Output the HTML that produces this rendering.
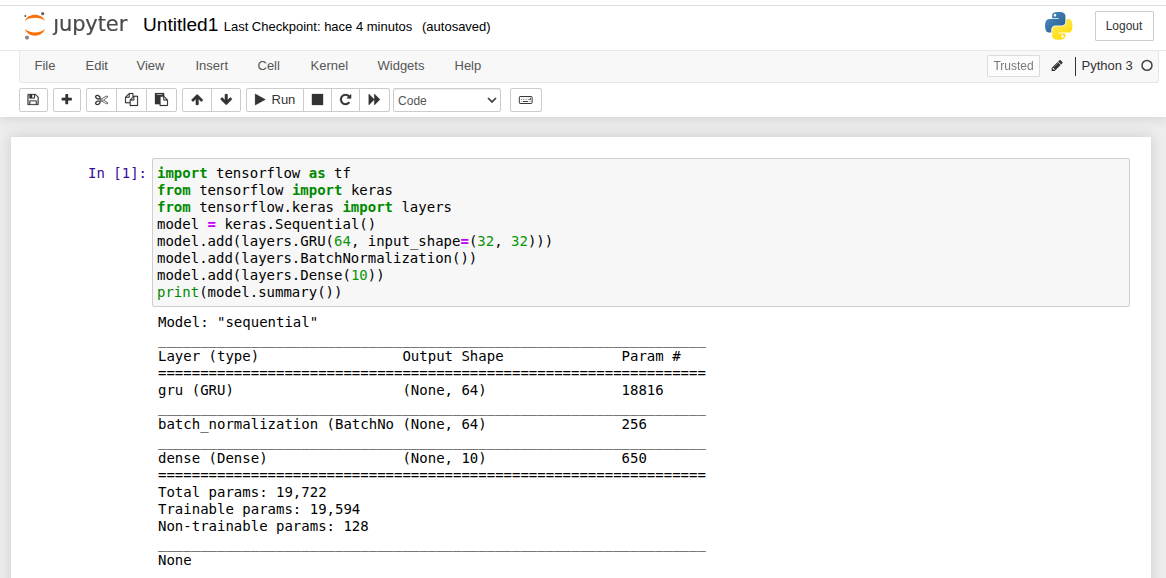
<!DOCTYPE html>
<html lang="en"><head><meta charset="utf-8"><title>Untitled1 - Jupyter Notebook</title>
<style>
*{box-sizing:border-box}
html,body{margin:0;padding:0}
body{width:1166px;height:578px;overflow:hidden;background:#eee;font-family:"Liberation Sans",Arial,sans-serif;font-size:13px;line-height:1.42857;color:#000;position:relative}
#topstrip{position:absolute;left:0;top:0;width:1166px;height:5px;background:#fff;z-index:3}
#topline{position:absolute;left:0;top:5px;width:1166px;height:1px;background:#dcdfe3;z-index:3}
#header{position:absolute;left:0;top:6px;width:1166px;height:111px;background:#fff;box-shadow:0 0 12px 1px rgba(87,87,87,.2);z-index:2}
#header>*{position:absolute}
#hline{left:0;top:44px;width:1166px;height:1px;background:#e7e7e7}
#logo{left:16px;top:0;will-change:transform}
#fname{left:143px;top:7px;font-size:19.1px;line-height:24px;color:#000;white-space:nowrap}
#ckpt{left:223.7px;top:12px;font-size:13px;line-height:18px;white-space:nowrap}
#auto{left:422px;top:12px;font-size:13px;line-height:18px;white-space:nowrap}
#logout{left:1095px;top:5px;width:59px;height:30px;border:1px solid #ccc;border-radius:1px;background:#fff;font-size:12px;line-height:28px;text-align:center;color:#333;text-indent:-1px}
#pylogo{left:1045px;top:6px}
#menubar{left:19px;top:44px;width:1140px;height:33px;background:#f8f8f8;border:1px solid #e7e7e7;border-radius:2px}
.mi{position:absolute;top:6px;font-size:13px;line-height:18px;color:#555;margin-left:-0.5px;white-space:nowrap}
#trusted{position:absolute;left:967px;top:4px;width:53px;height:22px;border:1px solid #ccc;border-radius:1px;background:#fff;color:#333;opacity:.65;will-change:transform;font-size:12px;line-height:20px;text-align:center}
#pencil{position:absolute;left:0;top:0}#pencil svg{position:absolute}
#kbar{position:absolute;left:1055px;top:6px;width:1px;height:19px;background:#333}
#kname{position:absolute;left:1061.5px;top:5px;font-size:13px;line-height:20px;color:#333;white-space:nowrap}
#kind{position:absolute;left:1120px;top:8px}
#toolbar{left:0;top:82px;width:1166px;height:24px}
.btn{position:absolute;top:0;height:24px;border:1px solid #ccc;background:#fff;border-radius:2px;color:#333}
#toolbar svg{position:absolute}
#run{position:absolute;left:271.5px;top:3px;font-size:13px;line-height:18px;color:#333}
#sel{box-shadow:inset 0 1px 1px rgba(0,0,0,.075)}
#sel span{position:absolute;left:4.1px;top:3px;font-size:12px;line-height:18px;color:#555}
#site{position:absolute;left:0;top:117px;width:1166px;height:461px;background:#eee}
#nbc{position:absolute;left:11px;top:20px;width:1140px;height:460px;background:#fff;box-shadow:0 0 12px 1px rgba(87,87,87,.2)}
.mono{font-family:"DejaVu Sans Mono","Liberation Mono",monospace;font-size:14px;line-height:17px;white-space:pre}
#prompt{position:absolute;left:77px;top:28px;color:#3c0c9c}
#inarea{position:absolute;left:141px;top:21px;width:978px;height:149px;border:1px solid #cfcfcf;border-radius:2px;background:#f7f7f7}
#code{position:absolute;left:4px;top:6px;margin:0;color:#000}
#out{position:absolute;left:147px;top:177px;margin:0;color:#000}
.k{color:#008a00;font-weight:bold}.n{color:#0a960a}.o{color:#c400f5;font-weight:bold}.b{color:#008a00}
</style></head><body>
<div id="topstrip"></div><div id="topline"></div>
<div id="header">
 <svg id="logo" width="120" height="40" viewBox="16 6 120 40">
  <path fill="#fb6f04" d="M24.9,21 C28,12.6 42,12.6 45,21 C40.5,16.6 29.5,16.6 24.9,21z"/>
  <path fill="#fb6f04" d="M24.9,29.1 C28,37.9 42,37.9 45,29.1 C40.5,33.6 29.5,33.6 24.9,29.1z"/>
  <circle cx="25.3" cy="15.9" r="1" fill="#555"/>
  <circle cx="42.7" cy="13.7" r="1.6" fill="#666"/>
  <circle cx="27" cy="37.6" r="2.1" fill="#8a8a8a"/>
  <text x="53.2" y="30.8" font-family="'DejaVu Sans','Liberation Sans',sans-serif" font-size="21" letter-spacing="-0.1" fill="#4a4a4a" stroke="#4a4a4a" stroke-width="0.22">jupyter</text>
  <rect x="53.6" y="12" width="5" height="6.3" fill="#fff"/>
 </svg>
 <span id="fname">Untitled1</span>
 <span id="ckpt">Last Checkpoint: hace 4 minutos</span>
 <span id="auto">(autosaved)</span>
 <svg id="pylogo" width="27.5" height="28" viewBox="0 0 111 113">
  <defs><linearGradient id="gb" x1="0" y1="0" x2="0.75" y2="0.8"><stop offset="0" stop-color="#4a8fc8"/><stop offset="1" stop-color="#2f6496"/></linearGradient>
  <linearGradient id="gy" x1="0.75" y1="0.9" x2="0.35" y2="0.2"><stop offset="0" stop-color="#ffdb00"/><stop offset="1" stop-color="#ffe850"/></linearGradient></defs>
  <path fill="url(#gb)" d="M54.918,0C50.335,0.021,45.958,0.412,42.106,1.094c-11.346,2.004-13.406,6.2-13.406,13.937v10.219h26.813v3.406H28.7 H18.638c-7.792,0-14.616,4.684-16.75,13.594c-2.462,10.213-2.571,16.586,0,27.25c1.906,7.938,6.458,13.594,14.25,13.594h9.219v-12.25 c0-8.85,7.657-16.656,16.75-16.656h26.781c7.455,0,13.406-6.138,13.406-13.625v-25.53c0-7.267-6.13-12.726-13.406-13.938 C64.282,0.328,59.502-0.02,54.918,0z M40.418,8.219c2.77,0,5.031,2.299,5.031,5.125c0,2.816-2.262,5.094-5.031,5.094 c-2.779,0-5.031-2.277-5.031-5.094C35.387,10.518,37.639,8.219,40.418,8.219z"/><path fill="url(#gy)" d="M85.638,28.657v11.906c0,9.231-7.826,17-16.75,17H42.106c-7.336,0-13.406,6.279-13.406,13.625v25.531 c0,7.267,6.319,11.541,13.406,13.625c8.487,2.496,16.626,2.947,26.781,0c6.75-1.954,13.406-5.888,13.406-13.625V86.5H55.513v-3.406 h26.781h13.406c7.792,0,10.696-5.435,13.406-13.594c2.799-8.399,2.68-16.476,0-27.25c-1.926-7.757-5.604-13.594-13.406-13.594H85.638z M70.575,93.313c2.779,0,5.031,2.277,5.031,5.094c0,2.826-2.252,5.125-5.031,5.125c-2.770,0-5.031-2.299-5.031-5.125 C65.544,95.590,67.806,93.313,70.575,93.313z"/>
 </svg>
 <div id="logout">Logout</div>
 <div id="hline"></div>
 <div id="menubar">
  <span class="mi" style="left:15px">File</span>
  <span class="mi" style="left:66px">Edit</span>
  <span class="mi" style="left:117px">View</span>
  <span class="mi" style="left:176px">Insert</span>
  <span class="mi" style="left:238px">Cell</span>
  <span class="mi" style="left:291px">Kernel</span>
  <span class="mi" style="left:358px">Widgets</span>
  <span class="mi" style="left:435px">Help</span>
  <div id="trusted">Trusted</div>
  <span id="pencil"><svg style="left:1029px;top:6px" width="16" height="16" viewBox="0 0 16 16"><path transform="translate(1.70,1.90) scale(0.007254)" fill="#333" d="M491 1536l91-91-235-235-91 91v107h128v128h107zm523-928q0-22-22-22-10 0-17 7l-542 542q-7 7-7 17 0 22 22 22 10 0 17-7l542-542q7-7 7-17zm-54-192l416 416-832 832h-416v-416zm683 96q0 53-37 90l-166 166-416-416 166-165q36-38 90-38 53 0 91 38l235 234q37 39 37 91z"/></svg></span>
  <div id="kbar"></div>
  <div id="kname">Python 3</div>
  <svg id="kind" width="13" height="13" viewBox="0 0 13 13"><circle cx="7.0" cy="6.4" r="4.95" fill="none" stroke="#444" stroke-width="1.5"/></svg>
 </div>
 <div id="toolbar">
  <div class="btn" style="left:19px;width:29px"></div>
  <div class="btn" style="left:53px;width:28px"></div>
  <div class="btn" style="left:86px;width:31px;border-radius:2px 0 0 2px"></div>
  <div class="btn" style="left:116px;width:31px;border-radius:0"></div>
  <div class="btn" style="left:146px;width:31px;border-radius:0 2px 2px 0"></div>
  <div class="btn" style="left:182px;width:30px;border-radius:2px 0 0 2px"></div>
  <div class="btn" style="left:211px;width:30px;border-radius:0 2px 2px 0"></div>
  <div class="btn" style="left:246px;width:58px;border-radius:2px 0 0 2px"></div>
  <div class="btn" style="left:303px;width:29px;border-radius:0"></div>
  <div class="btn" style="left:331px;width:29px;border-radius:0"></div>
  <div class="btn" style="left:359px;width:31px;border-radius:0 2px 2px 0"></div>
  <div class="btn" id="sel" style="left:393px;width:108px"><span>Code</span></div>
  <div class="btn" style="left:510px;width:32px"></div>
  <svg style="left:25px;top:4px" width="16" height="16" viewBox="0 0 16 16"><path transform="translate(1.55,1.00) scale(0.007254)" fill="#333" stroke="#333" stroke-width="32" d="M512 1536h768v-384h-768v384zm896 0h128v-896q0-14-10-38.500t-20-34.500l-281-281q-10-10-34-20t-39-10v416q0 40-28 68t-68 28h-576q-40 0-68-28t-28-68v-416h-128v1280h128v-416q0-40 28-68t68-28h832q40 0 68 28t28 68v416zm-384-928v-320q0-13-9.500-22.500t-22.500-9.500h-192q-13 0-22.500 9.500t-9.500 22.500v320q0 13 9.500 22.500t22.500 9.500h192q13 0 22.500-9.500t9.500-22.500zm640 32v928q0 40-28 68t-68 28h-1344q-40 0-68-28t-28-68v-1344q0-40 28-68t68-28h928q40 0 88 20t76 48l280 280q28 28 48 76t20 88z"/></svg><svg style="left:59px;top:4px" width="16" height="16" viewBox="0 0 16 16"><path transform="translate(1.25,1.00) scale(0.007254)" fill="#333" stroke="#333" stroke-width="10" d="M1600 736v192q0 40-28 68t-68 28h-416v416q0 40-28 68t-68 28h-192q-40 0-68-28t-28-68v-416h-416q-40 0-68-28t-28-68v-192q0-40 28-68t68-28h416v-416q0-40 28-68t68-28h192q40 0 68 28t28 68v416h416q40 0 68 28t28 68z"/></svg><svg style="left:94px;top:4px" width="16" height="16" viewBox="0 0 16 16"><path transform="translate(1.05,1.00) scale(0.007254)" fill="#333" stroke="#333" stroke-width="20" d="M960 896q26 0 45 19t19 45-19 45-45 19-45-19-19-45 19-45 45-19zm300 64l507 398q28 20 25 56-5 35-35 51l-128 64q-13 7-29 7-17 0-31-8l-690-387-110 66q-8 4-12 5 14 49 10 97-7 77-56 147.500t-132 123.500q-132 84-277 84-136 0-222-78-90-84-79-207 7-76 56-147t131-124q132-84 278-84 83 0 151 31 9-13 22-22l122-73-122-73q-13-9-22-22-68 31-151 31-146 0-278-84-82-53-131-124t-56-147q-5-59 15.500-113t63.500-93q85-79 222-79 145 0 277 84 83 52 132 123t56 148q4 48-10 97 4 1 12 5l110 66 690-387q14-8 31-8 16 0 29 7l128 64q30 16 35 51 3 36-25 56zm-681-260q46-42 21-108t-106-117q-92-59-192-59-74 0-109 33-46 42-21 108t106 117q92 59 192 59 74 0 109-33zm-85 745q81-51 106-117t-21-108q-35-33-109-33-100 0-192 59-81 51-106 117t21 108q35 33 109 33 100 0 192-59zm178-613l96 58v-11q0-36 33-56l14-8-79-47-26 26q-3 3-10 11t-12 12q-2 2-4 3.500t-3 2.500zm224 224l96 32 736-576-128-64-768 431v113l-160 96 9 8q2 2 7 6 4 4 11 12t11 12l26 26zm704 416l128-64-520-408-177 138q-2 3-13 7z"/></svg><svg style="left:124px;top:4px" width="16" height="16" viewBox="0 0 16 16"><path transform="translate(1.05,1.00) scale(0.007254)" fill="#333" stroke="#333" stroke-width="25" d="M1696 384q40 0 68 28t28 68v1216q0 40-28 68t-68 28h-960q-40 0-68-28t-28-68v-288h-544q-40 0-68-28t-28-68v-672q0-40 20-88t48-76l408-408q28-28 76-48t88-20h416q40 0 68 28t28 68v328q68-40 128-40h416zm-544 213l-299 299h299v-299zm-640-384l-299 299h299v-299zm196 647l316-316v-416h-384v416q0 40-28 68t-68 28h-416v640h512v-256q0-40 20-88t48-76zm956 804v-1152h-384v416q0 40-28 68t-68 28h-416v640h896z"/></svg><svg style="left:153px;top:4px" width="16" height="16" viewBox="0 0 16 16"><path transform="translate(1.95,1.00) scale(0.007254)" fill="#333" stroke="#333" stroke-width="25" d="M768 1664h896v-640h-416q-40 0-68-28t-28-68v-416h-384v1152zm256-1440v-64q0-13-9.500-22.500t-22.500-9.500h-704q-13 0-22.500 9.500t-9.500 22.500v64q0 13 9.500 22.500t22.500 9.500h704q13 0 22.500-9.500t9.500-22.500zm256 672h299l-299-299v299zm512 128v672q0 40-28 68t-68 28h-960q-40 0-68-28t-28-68v-160h-544q-40 0-68-28t-28-68v-1344q0-40 28-68t68-28h1088q40 0 68 28t28 68v328q21 13 36 28l408 408q28 28 48 76t20 88z"/></svg>
  <svg style="left:189px;top:4px" width="16" height="16" viewBox="0 0 16 16"><path transform="translate(1.70,1.00) scale(0.007254)" fill="#333" stroke="#333" stroke-width="32" d="M1675 971q0 51-37 90l-75 75q-38 38-91 38-54 0-90-38l-294-293v704q0 52-37.500 84.500t-90.500 32.500h-128q-53 0-90.500-32.500t-37.500-84.500v-704l-294 293q-36 38-90 38t-90-38l-75-75q-38-38-38-90 0-53 38-91l651-651q35-37 90-37 54 0 91 37l651 651q37 39 37 91z"/></svg><svg style="left:218px;top:4px" width="16" height="16" viewBox="0 0 16 16"><path transform="translate(1.75,1.00) scale(0.007254)" fill="#333" stroke="#333" stroke-width="32" d="M1675 832q0 53-37 90l-651 652q-39 37-91 37-53 0-90-37l-651-652q-38-36-38-90 0-53 38-91l74-75q39-37 91-37 53 0 90 37l294 294v-704q0-52 38-90t90-38h128q52 0 90 38t38 90v704l294-294q37-37 90-37 52 0 91 37l75 75q37 39 37 91z"/></svg><svg style="left:252px;top:4px" width="16" height="16" viewBox="0 0 16 16"><path transform="translate(1.70,1.00) scale(0.007254)" fill="#333" stroke="#333" stroke-width="32" d="M1576 927l-1328 738q-23 13-39.500 3t-16.500-36v-1472q0-26 16.500-36t39.500 3l1328 738q23 13 23 31t-23 31z"/></svg><svg style="left:310px;top:4px" width="16" height="16" viewBox="0 0 16 16"><path transform="translate(1.00,1.00) scale(0.007254)" fill="#333" stroke="#333" stroke-width="32" d="M1664 192v1408q0 26-19 45t-45 19h-1408q-26 0-45-19t-19-45v-1408q0-26 19-45t45-19h1408q26 0 45 19t19 45z"/></svg><svg style="left:338px;top:4px" width="16" height="16" viewBox="0 0 16 16"><path transform="translate(1.10,1.00) scale(0.007254)" fill="#333" stroke="#333" stroke-width="32" d="M1664 256v448q0 26-19 45t-45 19h-448q-42 0-59-40-17-39 14-69l138-138q-148-137-349-137-104 0-198.500 40.500t-163.500 109.500-109.500 163.500-40.500 198.500 40.500 198.500 109.500 163.500 163.500 109.500 198.500 40.500q119 0 225-52t179-147q7-10 23-12 15 0 25 9l137 138q9 8 9.500 20.500t-7.500 22.500q-109 132-264 204.500t-327 72.500q-156 0-298-61t-245-164-164-245-61-298 61-298 164-245 245-164 298-61q147 0 284.500 55.500t244.500 156.500l130-129q29-31 70-14 39 17 39 59z"/></svg><svg style="left:367px;top:4px" width="16" height="16" viewBox="0 0 16 16"><path transform="translate(1.70,1.00) scale(0.007254)" fill="#333" stroke="#333" stroke-width="32" d="M45 1651q-19 19-32 13t-13-32v-1472q0-26 13-32t32 13l710 710q9 9 13 19v-710q0-26 13-32t32 13l710 710q19 19 19 45t-19 45l-710 710q-19 19-32 13t-13-32v-710q-4 10-13 19z"/></svg><svg style="left:518px;top:7px" width="16" height="10" viewBox="518 95 16 10"><rect x="519.35" y="96.5" width="12.75" height="7" rx="0.7" fill="none" stroke="#383838" stroke-width="1"/><g fill="#333"><g opacity=".2"><rect x="520.9" y="97.6" width=".9" height=".9"/><rect x="522.6" y="97.6" width=".9" height=".9"/><rect x="524.3" y="97.6" width=".9" height=".9"/><rect x="526" y="97.6" width=".9" height=".9"/><rect x="527.7" y="97.6" width=".9" height=".9"/></g><g opacity=".55"><rect x="520.9" y="99.1" width="1.2" height=".9"/><rect x="523.1" y="99.1" width=".9" height=".9"/><rect x="524.8" y="99.1" width=".9" height=".9"/><rect x="526.5" y="99.1" width=".9" height=".9"/><rect x="528.1" y="99.1" width=".9" height=".9"/></g><path opacity=".75" d="M530,97.7h1v2.3h-1.9v-.9h.9z"/><rect x="523" y="101" width="5.2" height="1" opacity=".95"/><rect x="520.9" y="101" width=".9" height="1" opacity=".5"/><rect x="529.4" y="101" width=".7" height="1" opacity=".45"/><rect x="530.5" y="101" width=".7" height="1" opacity=".5"/></g></svg>
  <span id="run">Run</span>
  <svg style="left:487.2px;top:9.0px" width="10" height="6.4" viewBox="0 0 10 6.4"><path d="M1,1 L5,5 L9,1" fill="none" stroke="#444" stroke-width="1.75"/></svg>
 </div>
</div>
<div id="site">
 <div id="nbc">
  <div id="prompt" class="mono">In [1]:</div>
  <div id="inarea"><pre id="code" class="mono"><span class="k">import</span> tensorflow <span class="k">as</span> tf
<span class="k">from</span> tensorflow <span class="k">import</span> keras
<span class="k">from</span> tensorflow.keras <span class="k">import</span> layers
model <span class="o">=</span> keras.Sequential()
model.add(layers.GRU(<span class="n">64</span>, input_shape<span class="o">=</span>(<span class="n">32</span>, <span class="n">32</span>)))
model.add(layers.BatchNormalization())
model.add(layers.Dense(<span class="n">10</span>))
<span class="b">print</span>(model.summary())</pre></div>
  <pre id="out" class="mono">Model: "sequential"
_________________________________________________________________
Layer (type)                 Output Shape              Param #   
=================================================================
gru (GRU)                    (None, 64)                18816     
_________________________________________________________________
batch_normalization (BatchNo (None, 64)                256       
_________________________________________________________________
dense (Dense)                (None, 10)                650       
=================================================================
Total params: 19,722
Trainable params: 19,594
Non-trainable params: 128
_________________________________________________________________
None</pre>
 </div>
</div>
</body></html>
